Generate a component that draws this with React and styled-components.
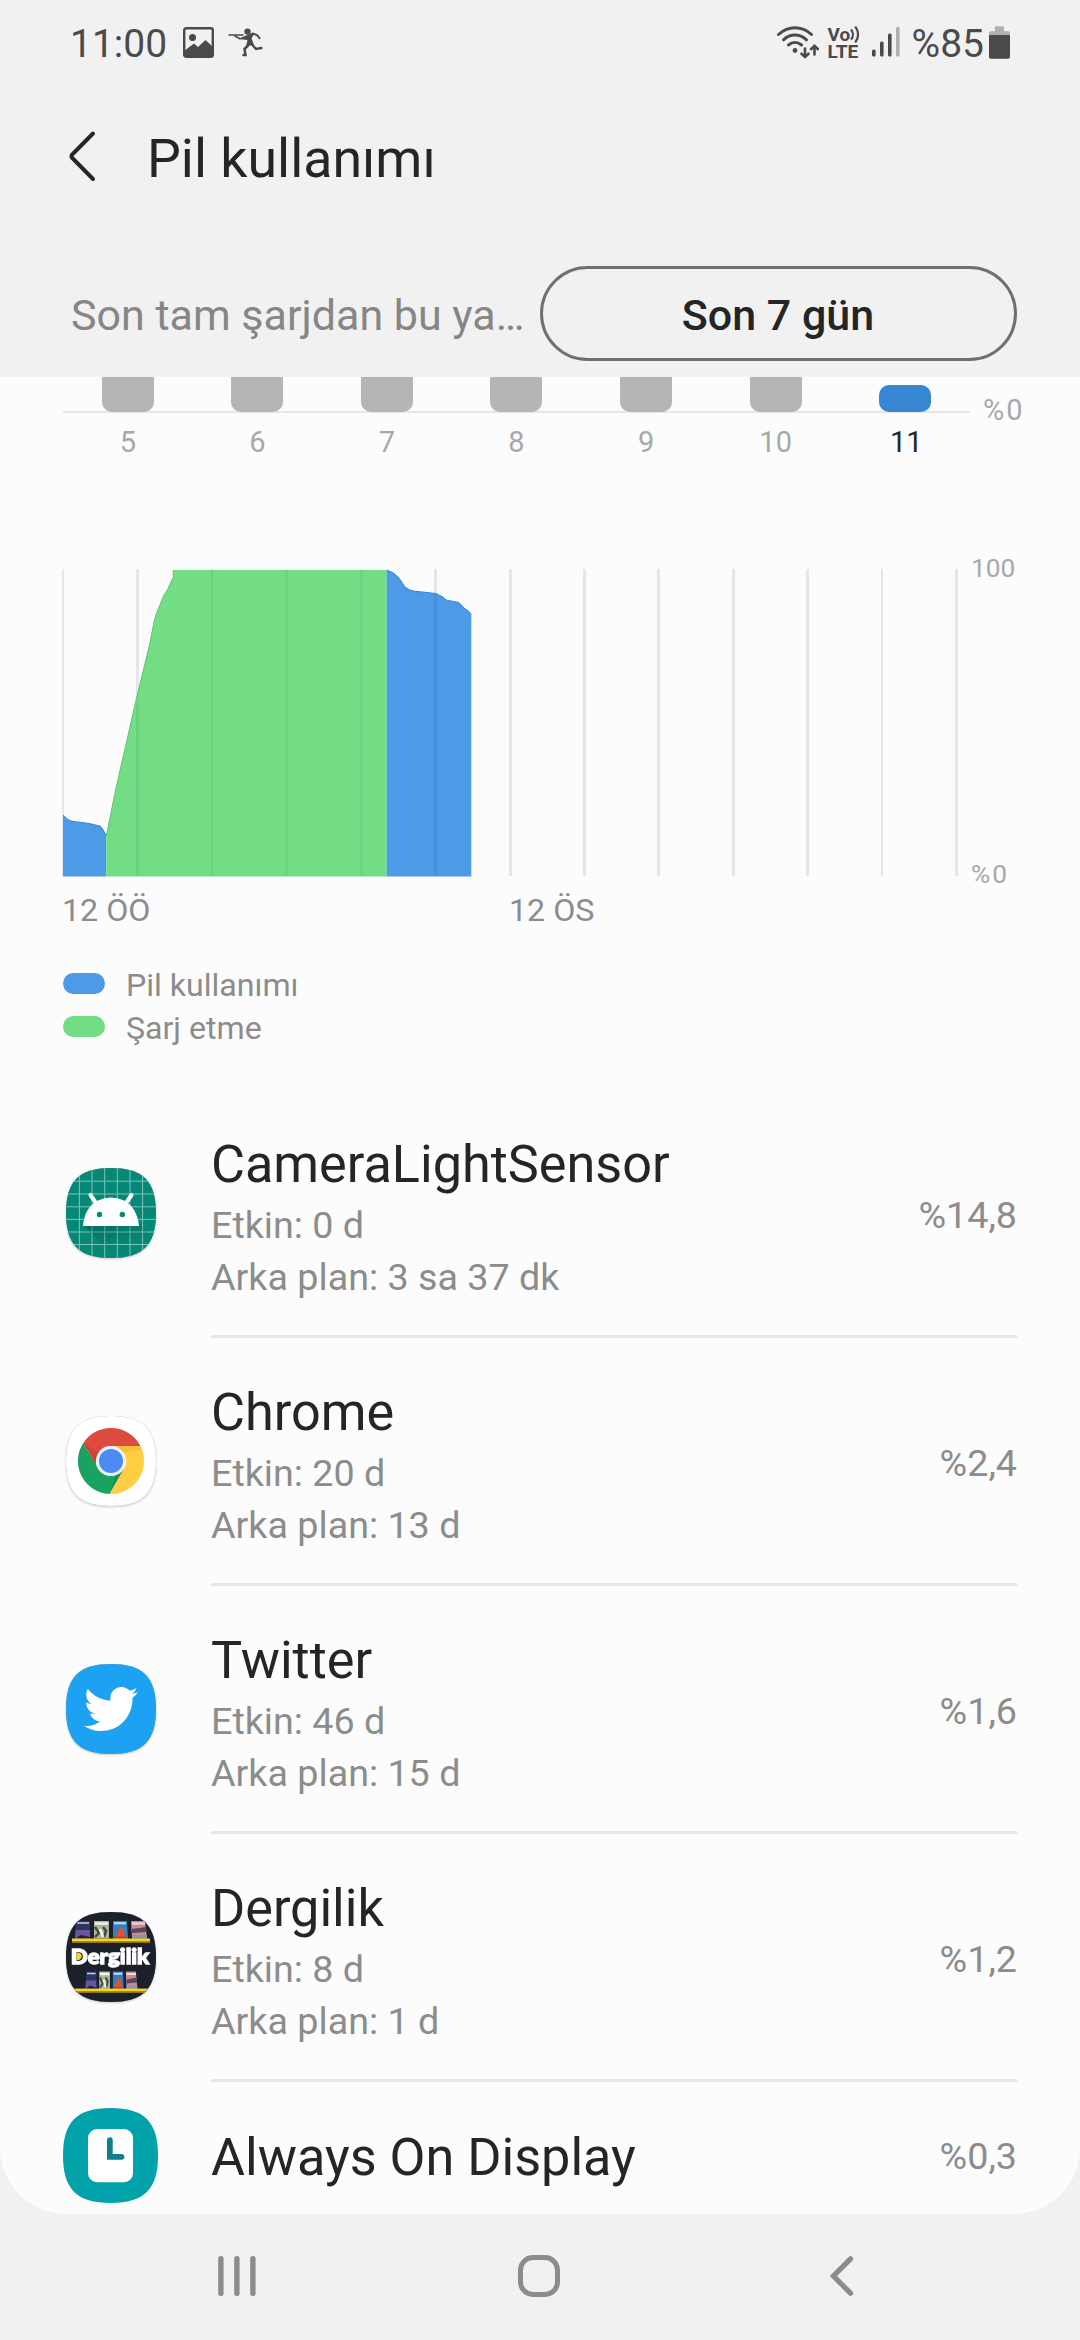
import React from "react";
import styled, { createGlobalStyle } from "styled-components";
import { FaTwitter } from "react-icons/fa";

const GlobalStyle = createGlobalStyle`
  body {
    margin: 0;
    background: #f1f1f1;
    font-family: Roboto, "Liberation Sans", sans-serif;
  }
  * {
    box-sizing: border-box;
  }
  svg {
    display: block;
    flex: none;
  }
`;

const Screen = styled.div`
  display: flex;
  flex-direction: column;
  width: 1080px;
  height: 2340px;
  overflow: hidden;
`;

const StatusBar = styled.div`
  display: flex;
  justify-content: space-between;
  align-items: center;
  height: 84px;
  padding: 0 70px 0 70px;
  color: #4a4a4a;
`;

const StatusGroup = styled.div`
  display: flex;
  align-items: center;
`;

const StatusText = styled.span`
  font-size: 39px;
  line-height: 46px;
  padding-top: 3px;
  margin: 0 ${(props) => props.$right}px 0 ${(props) => props.$left || 0}px;
`;

const RunnerSlot = styled.span`
  margin-left: 14px;
`;

const Volte = styled.span`
  display: flex;
  flex-direction: column;
  width: 32px;
  margin: 2px 12px 0 9px;
  font-size: 19px;
  font-weight: 700;
  line-height: 17.5px;
`;

const VolteTop = styled.span`
  display: flex;
  align-items: center;
`;

const TitleBar = styled.header`
  display: flex;
  align-items: center;
  height: 144px;
  padding-left: 68px;
`;

const Title = styled.h1`
  margin: 5px 0 0 50px;
  font-size: 53.7px;
  font-weight: 400;
  color: #252525;
`;

const Tabs = styled.div`
  display: grid;
  grid-template-columns: 1fr 1fr;
  height: 149px;
  padding: 38px 63px 0 63px;
`;

const Tab = styled.button`
  height: 95px;
  padding: 2px 9px 0 8px;
  white-space: nowrap;
  background: none;
  border: 3px solid ${(props) => (props.$active ? "#707070" : "transparent")};
  border-left-width: ${(props) => (props.$active ? 3 : 0)}px;
  border-right-width: ${(props) => (props.$active ? 3 : 0)}px;
  border-radius: ${(props) => (props.$active ? 48 : 0)}px;
  font-family: inherit;
  font-size: 43px;
  font-weight: ${(props) => (props.$active ? 500 : 400)};
  text-align: ${(props) => (props.$active ? "center" : "left")};
  color: ${(props) => (props.$active ? "#252525" : "#868686")};
`;

const Panel = styled.main`
  height: 1837px;
  flex: none;
  overflow: hidden;
  background: #fcfcfc;
  border-radius: 0 0 66px 66px;
`;

const WeekChart = styled.section`
  display: flex;
  padding-left: 63px;
`;

const WeekPlot = styled.div`
  width: 907px;
`;

const Bars = styled.div`
  display: grid;
  grid-template-columns: repeat(7, 1fr);
  justify-items: center;
  align-items: end;
  height: 36px;
  border-bottom: 2px solid #e6e6e6;
`;

const Bar = styled.div`
  width: 52px;
  height: ${(props) => (props.$today ? 27 : 35)}px;
  margin-bottom: -1px;
  background: ${(props) => (props.$today ? "#3786d2" : "#b5b5b5")};
  border-radius: ${(props) => (props.$today ? "10px" : "0 0 10px 10px")};
`;

const Days = styled.div`
  display: grid;
  grid-template-columns: repeat(7, 1fr);
  margin-top: 10px;
  text-align: center;
`;

const Day = styled.span`
  padding-left: ${(props) => (props.$today ? 2 : 0)}px;
  font-size: 29px;
  line-height: 38px;
  color: ${(props) => (props.$today ? "#252525" : "#a8a8a8")};
`;

const AxisLabel = styled.span`
  font-size: ${(props) => props.$size}px;
  line-height: 32px;
  letter-spacing: ${(props) => props.$spacing || 0}px;
  color: #a8a8a8;
`;

const WeekAxis = styled.div`
  padding: 17px 0 0 13px;
`;

const DayChart = styled.section`
  display: flex;
  height: 338px;
  margin-top: 91px;
  padding-left: 62px;

  > svg {
    margin-top: 17px;
  }
`;

const DayAxis = styled.div`
  display: flex;
  flex-direction: column;
  justify-content: space-between;
  padding-left: 10px;
`;

const Hours = styled.div`
  display: grid;
  grid-template-columns: 447px 447px;
  padding-left: 62px;
  font-size: 32.2px;
  line-height: 40px;
  color: #8c8c8c;
`;

const Legend = styled.ul`
  margin: 32px 0 0;
  padding: 0 0 0 63px;
  list-style: none;
`;

const LegendItem = styled.li`
  display: flex;
  align-items: center;
  gap: 21px;
  height: 43px;
  font-size: 32.1px;
  color: #8c8c8c;

  &::before {
    content: "";
    width: 42px;
    height: 21px;
    border-radius: 11px;
    background: ${(props) => props.$color};
  }

  span {
    padding-top: 3px;
  }
`;

const AppList = styled.section`
  margin-top: 42px;
`;

const AppRow = styled.div`
  display: flex;
  height: ${(props) => (props.$compact ? 150 : 248)}px;
  padding: 0 63px;
`;

const IconSlot = styled.div`
  display: flex;
  align-items: center;
  justify-content: center;
  width: 95px;
  margin-right: 53px;
  padding-bottom: 3px;
`;

const AppBody = styled.div`
  display: flex;
  flex: 1;
  justify-content: space-between;
  align-items: center;
  padding-top: ${(props) => (props.$compact ? 1 : 8)}px;
  border-bottom: ${(props) => (props.$compact ? 0 : 3)}px solid #e6e6e6;
`;

const AppName = styled.h2`
  margin: 0;
  font-size: 52.2px;
  font-weight: 400;
  line-height: 68px;
  color: #252525;
`;

const AppDetail = styled.p`
  margin: 0;
  font-size: 37.7px;
  line-height: 52px;
  color: #8c8c8c;
`;

const AppShare = styled.span`
  padding-bottom: 3px;
  font-size: 37.7px;
  color: #8c8c8c;
`;

const Tile = styled.div`
  display: grid;
  place-items: center;
  filter: drop-shadow(0 0 0.6px rgba(0, 0, 0, 0.3))
    drop-shadow(0 1.5px 1px rgba(0, 0, 0, 0.2));

  > svg {
    grid-area: 1 / 1;
  }
`;

const NavBar = styled.nav`
  display: flex;
  justify-content: space-between;
  align-items: center;
  height: 126px;
  padding: 0 225px 2px 217px;
`;

const HomeSlot = styled.span`
  margin-right: 9px;
`;

const SQUIRCLE =
  "M45 0C77 0 90 13 90 45S77 90 45 90 0 77 0 45 13 0 45 0Z";

const PictureIcon = () => (
  <svg width="31" height="31" viewBox="0 0 31 31">
    <rect x="1.2" y="1.2" width="28.6" height="28.6" rx="2" fill="none" stroke="#4a4a4a" strokeWidth="2.4" />
    <circle cx="9.5" cy="10.5" r="3.5" fill="#4a4a4a" />
    <path d="M1 24L11 16.5L15 20L22.5 13L30 20V30H1Z" fill="#4a4a4a" />
  </svg>
);

const RunnerIcon = () => (
  <svg width="36" height="30" viewBox="0 0 36 30" fill="none" stroke="#4a4a4a" strokeLinecap="round">
    <circle cx="19.5" cy="4.6" r="3.2" fill="#4a4a4a" stroke="none" />
    <path d="M14 10.2L24 6L26 7L23.5 11.5L26 18L18 19L19.5 13L15 12.4L10 12.2Z" fill="#4a4a4a" stroke="none" />
    <path d="M1 8H15M7 9.3L12 11.5" strokeWidth="1.5" />
    <path d="M24.5 6.5L29 8L31.5 11.2" strokeWidth="2" />
    <path d="M20 18.5L16.5 22L17.5 28H15.5" strokeWidth="2.5" />
    <path d="M24 17.5L28 22L33.5 21" strokeWidth="2.3" />
  </svg>
);

const WifiIcon = () => (
  <svg width="43" height="34" viewBox="0 0 43 34" fill="none" stroke="#4a4a4a" strokeLinecap="round">
    <path d="M2.5 9.5C12.5 0.5 25.5 0.5 35.5 9.5" strokeWidth="3" />
    <path d="M7.5 14.8C14.5 8.5 23.5 8.5 30.5 14.8" strokeWidth="3" />
    <path d="M12.5 20C16.5 16.6 21.5 16.6 25.5 20" strokeWidth="3" />
    <circle cx="19" cy="25.5" r="2.4" fill="#4a4a4a" stroke="none" />
    <path d="M29 23.5V32M25.5 28.7L29 32L32.5 28.7" strokeWidth="2.6" />
    <path d="M38.5 29.5V21M35 24.2L38.5 20.8L42 24.2" strokeWidth="2.6" />
  </svg>
);

const WavesIcon = () => (
  <svg width="10" height="17" viewBox="0 0 10 17" fill="none" stroke="#4a4a4a" strokeWidth="2.2">
    <path d="M1 3.5C3.6 6.5 3.6 10.5 1 13.5" />
    <path d="M5.2 0.5C9 5 9 12 5.2 16.5" />
  </svg>
);

const SignalIcon = () => (
  <svg width="28" height="32" viewBox="0 0 28 32" fill="#4a4a4a">
    <rect x="0" y="23.5" width="3.6" height="7" rx="1.5" />
    <rect x="8" y="15.5" width="3.6" height="15" rx="1.5" />
    <rect x="16" y="7.5" width="3.6" height="23" rx="1.5" />
    <rect x="24" y="0.8" width="3.6" height="29.7" rx="1.5" fill="#b0b0b0" />
  </svg>
);

const BatteryIcon = () => (
  <svg width="21" height="33" viewBox="0 0 21 33">
    <path d="M6 1.5Q6 0.3 7 0.3H14Q15 0.3 15 1.5V5.2H19Q21 5.2 21 7V10H0V7Q0 5.2 2 5.2H6Z" fill="#b0b0b0" />
    <path d="M0 9H21V31Q21 32.8 19 32.8H2Q0 32.8 0 31Z" fill="#4a4a4a" />
  </svg>
);

const BackIcon = () => (
  <svg width="29" height="52" viewBox="0 0 29 52" fill="none" stroke="#252525">
    <path d="M25 3.5L4.2 24.5Q2.8 26.3 4.2 28L25 49" strokeWidth="4" strokeLinecap="round" />
  </svg>
);

const AndroidIcon = () => {
  const xs = [13.4, 26, 38.7, 51.3, 64, 76.6];
  const ys = [13.2, 26, 38.8, 51.4, 64, 76.5];
  return (
    <Tile>
      <svg width="90" height="90" viewBox="0 0 90 90">
        <defs>
          <clipPath id="tile">
            <path d={SQUIRCLE} />
          </clipPath>
          <linearGradient id="cast" x1="0.2" y1="0" x2="0.7" y2="1">
            <stop offset="0" stopColor="#00332c" stopOpacity="0.34" />
            <stop offset="0.7" stopColor="#00332c" stopOpacity="0" />
          </linearGradient>
        </defs>
        <g clipPath="url(#tile)">
          <rect width="90" height="90" fill="#058876" />
          {xs.map((x) => (
            <path key={x} d={`M${x} 0V90`} stroke="#7ec3b9" strokeWidth="1" />
          ))}
          {ys.map((y) => (
            <path key={y} d={`M0 ${y}H90`} stroke="#7ec3b9" strokeWidth="1" />
          ))}
          <path d="M17 57L50 90H90V74L68 50Z" fill="url(#cast)" />
          <path d="M17 58Q18.5 39.5 32 32.5Q45 26.5 58 32.5Q71 39.5 73 58Z" fill="#fff" />
          <path d="M24.5 27L31 36.5M65.5 27L59 36.5" stroke="#fff" strokeWidth="4" strokeLinecap="round" />
          <circle cx="33.5" cy="46.5" r="2.7" fill="#058876" />
          <circle cx="56.3" cy="46.5" r="2.7" fill="#058876" />
        </g>
      </svg>
    </Tile>
  );
};

const ChromeIcon = () => (
  <Tile>
    <svg width="90" height="90" viewBox="0 0 90 90">
      <path d={SQUIRCLE} fill="#fff" />
      <path d="M17.3 27A33 33 0 0 1 74.4 30H45A15 15 0 0 0 32 52.5Z" fill="#dc4b3e" />
      <path d="M74.4 30A33 33 0 0 1 43.3 78L58 52.5A15 15 0 0 0 45 30Z" fill="#ffce43" />
      <path d="M43.3 78A33 33 0 0 1 17.3 27L32 52.5A15 15 0 0 0 58 52.5Z" fill="#1aa260" />
      <path d="M45 30H74.4L75.5 33.5L58 36.5Z" fill="#e0a52c" opacity="0.35" />
      <path d="M17.3 27L30 49L32 36Z" fill="#a8352c" opacity="0.3" />
      <path d="M43.3 78L58 52.5L50 58Z" fill="#0c6b3e" opacity="0.35" />
      <circle cx="45" cy="45" r="15" fill="#f1f1f1" />
      <circle cx="45" cy="45" r="12" fill="#4c8bf5" />
    </svg>
  </Tile>
);

const TwitterIcon = () => (
  <Tile>
    <svg width="90" height="90" viewBox="0 0 90 90">
      <path d={SQUIRCLE} fill="#1da1f2" />
    </svg>
    <FaTwitter size={54} color="#fff" />
  </Tile>
);

const Covers = ({ x, y, scale }) => (
  <g transform={`translate(${x} ${y}) scale(${scale} 1)`}>
    <path d="M1 0H15V17.5H0Z" fill="#2b3566" />
    <path d="M0.6 9H15V17.5H0Z" fill="#6a56a0" />
    <path d="M0.2 17.5L6 14L15 16V17.5Z" fill="#1c2240" />
    <path d="M2 2H14" stroke="#c9cbe0" strokeWidth="1.5" />
    <path d="M19 0H34V17.5H19Z" fill="#a8b49b" />
    <path d="M20 2.5H33" stroke="#f2f2ee" strokeWidth="2.6" />
    <path d="M20 6L24 12L20 16M28 6L31 10L29 16" stroke="#3f4d38" strokeWidth="2.4" fill="none" />
    <path d="M25 8L28 16" stroke="#f2f2ee" strokeWidth="2.6" />
    <path d="M38 0H52L53 17.5H38Z" fill="#2f7fc4" />
    <path d="M39 2.2H51" stroke="#bfe0f5" strokeWidth="2" />
    <path d="M45 5L49 9L50 17.5H39L43 11Z" fill="#e2532b" />
    <path d="M38 15.5H53V17.5H38Z" fill="#b8432a" />
    <path d="M56 0H70L72 17.5H57Z" fill="#c08f98" />
    <path d="M57 2.4H70" stroke="#f0dfe2" strokeWidth="2" />
    <path d="M57 8L71 6L71.5 11L57 12Z" fill="#5d4560" />
    <path d="M57 14H72V17.5H57Z" fill="#8d93ad" />
  </g>
);

const DergilikIcon = () => (
  <Tile>
    <svg width="90" height="90" viewBox="0 0 90 90">
      <g clipPath="url(#tile)">
        <rect width="90" height="90" fill="#1b202b" />
        <Covers x={9} y={9} scale={1} />
        <rect x="6" y="26.5" width="78" height="2.6" fill="#f5d327" />
        <rect x="6" y="29" width="78" height="1.8" fill="#a98a12" />
        <text
          x="4.8"
          y="51.8"
          textLength="78.5"
          lengthAdjust="spacingAndGlyphs"
          fontFamily="Lato, sans-serif"
          fontWeight="900"
          fontSize="21.5"
          fill="#fff"
          stroke="#fff"
          strokeWidth="1.3"
        >
          Dergilik
        </text>
        <path d="M10.6 40.5H12Q15.6 41 15.6 44.2T12 48.2H10.6Z" fill="#f5d327" />
        <Covers x={19.5} y={59.5} scale={0.72} />
        <rect x="0" y="76.6" width="90" height="2.4" fill="#f5d327" />
        <rect x="0" y="79" width="90" height="1.8" fill="#a98a12" />
      </g>
    </svg>
  </Tile>
);

const ClockIcon = () => (
  <svg width="95" height="95" viewBox="0 0 90 90">
    <path d={SQUIRCLE} fill="#02a2ab" />
    <rect x="23.7" y="20" width="42.6" height="50.3" rx="8.5" fill="#fff" />
    <path d="M41.7 30.5A2.7 2.7 0 0 1 47.1 30.5V43.5H55.4A2.7 2.7 0 0 1 55.4 49H41.7Z" fill="#117f8b" />
  </svg>
);

const GRID = Array.from({ length: 13 }, (_, i) => i * 74.42);

const DayPlot = () => (
  <svg width="899" height="308" viewBox="0 0 899 308">
    {GRID.map((x, i) => (
      <rect
        key={x}
        x={Math.round(x)}
        y="0"
        width={i === 0 || i === 11 ? 2 : 3}
        height="307"
        fill="#e6e6e6"
      />
    ))}
    <path
      d="M1 246Q5 251 10 252.3L26 254.3L38 257Q40 258 44.3 267V307.5H1Z"
      fill="#4d9ae6"
    />
    <path
      d="M44.3 267L54 219L75 127L88 74L92 53Q94 44 97 38L102 26L105.5 20.5L111.3 8V1H324.7V307.5H44.3Z"
      fill="#73dd85"
    />
    <path
      d="M324.7 1Q332 3 337 9L343 18Q348 21.5 351 22L374 24.5L381 28L384 31L397 33.5L402 39L407 42.5L409.3 46V307.5H324.7Z"
      fill="#4d9ae6"
    />
    <path
      d="M1 246Q5 251 10 252.3L26 254.3L38 257Q40 258 44.3 267M324.7 1Q332 3 337 9L343 18Q348 21.5 351 22L374 24.5L381 28L384 31L397 33.5L402 39L407 42.5L409.3 46"
      fill="none"
      stroke="#3786d2"
    />
    <path
      d="M44.3 267L54 219L75 127L88 74L92 53Q94 44 97 38L102 26L105.5 20.5L111.3 8V1"
      fill="none"
      stroke="#5fc873"
    />
    <path d="M75.5 128V307" stroke="#6bd27e" strokeWidth="3" />
    <path d="M150 1V307M224.5 1V307M299.5 1V307" stroke="#6bd27e" strokeWidth="2.4" />
    <path d="M373.5 25V307" stroke="#4690db" strokeWidth="3" />
  </svg>
);

const RecentsIcon = () => (
  <svg width="40" height="42" viewBox="0 0 40 42" fill="#8c8c8c">
    <rect x="1.2" y="1" width="5.4" height="40" rx="2.5" />
    <rect x="17.2" y="1" width="5.4" height="40" rx="2.5" />
    <rect x="33.2" y="1" width="5.4" height="40" rx="2.5" />
  </svg>
);

const HomeIcon = () => (
  <svg width="42" height="42" viewBox="0 0 42 42" fill="none" stroke="#8c8c8c">
    <rect x="2.5" y="2.5" width="37" height="37" rx="12.5" strokeWidth="5" />
  </svg>
);

const NavBackIcon = () => (
  <svg width="25" height="42" viewBox="0 0 25 42" fill="none" stroke="#8c8c8c">
    <path d="M20.5 3.8L3.5 21L20.5 38.2" strokeWidth="5.2" strokeLinecap="round" />
  </svg>
);

const days = [5, 6, 7, 8, 9, 10, 11];

const apps = [
  { name: "CameraLightSensor", active: "0 d", background: "3 sa 37 dk", share: "%14,8", Icon: AndroidIcon },
  { name: "Chrome", active: "20 d", background: "13 d", share: "%2,4", Icon: ChromeIcon },
  { name: "Twitter", active: "46 d", background: "15 d", share: "%1,6", Icon: TwitterIcon },
  { name: "Dergilik", active: "8 d", background: "1 d", share: "%1,2", Icon: DergilikIcon },
  { name: "Always On Display", share: "%0,3", Icon: ClockIcon },
];

export default function App() {
  return (
    <Screen>
      <GlobalStyle />
      <StatusBar>
        <StatusGroup>
          <StatusText $right={16}>11:00</StatusText>
          <PictureIcon />
          <RunnerSlot>
            <RunnerIcon />
          </RunnerSlot>
        </StatusGroup>
        <StatusGroup>
          <WifiIcon />
          <Volte>
            <VolteTop>
              Vo
              <WavesIcon />
            </VolteTop>
            <span>LTE</span>
          </Volte>
          <SignalIcon />
          <StatusText $left={12} $right={5}>
            %85
          </StatusText>
          <BatteryIcon />
        </StatusGroup>
      </StatusBar>
      <TitleBar>
        <BackIcon />
        <Title>Pil kullanımı</Title>
      </TitleBar>
      <Tabs>
        <Tab>Son tam şarjdan bu ya…</Tab>
        <Tab $active>Son 7 gün</Tab>
      </Tabs>
      <Panel>
        <WeekChart>
          <WeekPlot>
            <Bars>
              {days.map((day) => (
                <Bar key={day} $today={day === 11} />
              ))}
            </Bars>
            <Days>
              {days.map((day) => (
                <Day key={day} $today={day === 11}>
                  {day}
                </Day>
              ))}
            </Days>
          </WeekPlot>
          <WeekAxis>
            <AxisLabel $size={29} $spacing={2}>
              %0
            </AxisLabel>
          </WeekAxis>
        </WeekChart>
        <DayChart>
          <DayPlot />
          <DayAxis>
            <AxisLabel $size={26.3}>100</AxisLabel>
            <AxisLabel $size={26.3} $spacing={2}>
              %0
            </AxisLabel>
          </DayAxis>
        </DayChart>
        <Hours>
          <span>12 ÖÖ</span>
          <span>12 ÖS</span>
        </Hours>
        <Legend>
          <LegendItem $color="#4d9ae6">
            <span>Pil kullanımı</span>
          </LegendItem>
          <LegendItem $color="#73dd85">
            <span>Şarj etme</span>
          </LegendItem>
        </Legend>
        <AppList>
          {apps.map(({ name, active, background, share, Icon }) => (
            <AppRow key={name} $compact={!active}>
              <IconSlot>
                <Icon />
              </IconSlot>
              <AppBody $compact={!active}>
                <div>
                  <AppName>{name}</AppName>
                  {active && <AppDetail>Etkin: {active}</AppDetail>}
                  {background && <AppDetail>Arka plan: {background}</AppDetail>}
                </div>
                <AppShare>{share}</AppShare>
              </AppBody>
            </AppRow>
          ))}
        </AppList>
      </Panel>
      <NavBar>
        <RecentsIcon />
        <HomeSlot>
          <HomeIcon />
        </HomeSlot>
        <NavBackIcon />
      </NavBar>
    </Screen>
  );
}
